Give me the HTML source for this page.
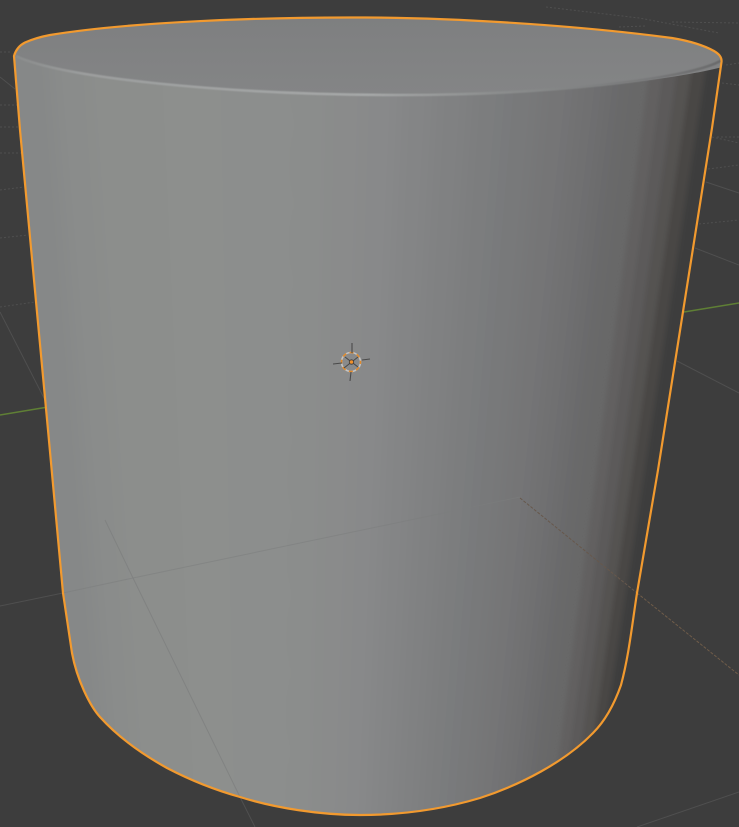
<!DOCTYPE html>
<html>
<head>
<meta charset="utf-8">
<style>
html,body{margin:0;padding:0;background:#3d3d3d;width:739px;height:827px;overflow:hidden}
svg{display:block}
</style>
</head>
<body>
<svg width="739" height="827" viewBox="0 0 739 827" xmlns="http://www.w3.org/2000/svg">
<defs>
<clipPath id="c"><path d="M14 56C16 49 20 45 25 42.500C33 39 42 36.500 50 35C130 22 260 17 365 17.500C470 18 590 27 672 38C690 41 705 46 714 51C719 54 722 57 721.500 62L712 128L658 470L637 593C632 625 629 655 621 685C614 705 604 722 593 733C565 762 520 785 480 798C440 810 400 815 360 815C320 815 275 808 240 797C215 790 190 780 167 768C140 753 118 737 100 717C90 706 77 680 72 653L63 593L48 430L20 130Z"/></clipPath>
<linearGradient id="top" x1="0" y1="18" x2="0" y2="96" gradientUnits="userSpaceOnUse">
<stop offset="0" stop-color="#7e7f80"/><stop offset="1" stop-color="#848586"/>
</linearGradient>
<linearGradient id="rim" x1="14" y1="0" x2="721" y2="0" gradientUnits="userSpaceOnUse">
<stop offset="0" stop-color="#8a8c8c"/><stop offset=".1" stop-color="#9c9e9e"/><stop offset=".5" stop-color="#a6a8a8"/><stop offset=".68" stop-color="#8c8e8e"/><stop offset=".9" stop-color="#78797a"/><stop offset="1" stop-color="#6a6a6b"/>
</linearGradient>
<filter id="b" filterUnits="userSpaceOnUse" x="-60" y="-60" width="860" height="950"><feGaussianBlur stdDeviation="9"/></filter>
<filter id="e" filterUnits="userSpaceOnUse" x="-60" y="-60" width="860" height="950"><feGaussianBlur stdDeviation="2.500"/></filter>
<filter id="s" filterUnits="userSpaceOnUse" x="-60" y="-60" width="860" height="950"><feGaussianBlur stdDeviation=".6"/></filter>
</defs>
<rect width="739" height="827" fill="#3d3d3d"/>
<g fill="none" stroke="#4f4f4f" stroke-width="1">
<g stroke-dasharray="2 2">
<path d="M0 52H12M0 105H17M0 127H19M0 153H21M0 190L24 187M0 238L28 235M0 307L35 302"/>
<path d="M546 7L639 18L719 33M672 22L739 23M619 27L646 26M726 65L739 63M722 83L739 85M717 137L739 137"/>
<path d="M712 137L739 143M708 169L739 165M699 224L739 220"/>
</g>
<path d="M0 77L15 89M0 312L45 400M0 606L63 593M706 182L739 193M695 248L739 265M677 361L739 393M637 827L739 792M240 797L255 827"/>
</g>
<path d="M0 415L48 407M684 312L739 303" stroke="#5f7f35" stroke-width="1.400" fill="none"/>
<g clip-path="url(#c)">
<g filter="url(#b)">
<polygon points="-40,0 44.600,0 112.300,830 40,830" fill="#868888"/>
<polygon points="44.600,0 80.700,0 137.900,830 112.300,830" fill="#8a8c8b"/>
<polygon points="80.700,0 152.900,0 189.300,830 137.900,830" fill="#8c8e8c"/>
<polygon points="152.900,0 225.100,0 240.600,830 189.300,830" fill="#8d8f8d"/>
<polygon points="225.100,0 297.300,0 292,830 240.600,830" fill="#8c8e8d"/>
<polygon points="297.300,0 333.400,0 317.600,830 292,830" fill="#8b8d8c"/>
<polygon points="333.400,0 369.500,0 343.300,830 317.600,830" fill="#8a8b8b"/>
<polygon points="369.500,0 405.600,0 369,830 343.300,830" fill="#88898a"/>
<polygon points="405.600,0 441.700,0 394.600,830 369,830" fill="#848586"/>
<polygon points="441.700,0 477.800,0 420.300,830 394.600,830" fill="#808182"/>
<polygon points="477.800,0 513.900,0 446,830 420.300,830" fill="#7c7d7e"/>
<polygon points="513.900,0 550,0 471.600,830 446,830" fill="#78797a"/>
<polygon points="550,0 586.100,0 497.300,830 471.600,830" fill="#747576"/>
<polygon points="586.100,0 615,0 517.900,830 497.300,830" fill="#707071"/>
<polygon points="615,0 636.600,0 533.200,830 517.900,830" fill="#6b6b6c"/>
<polygon points="636.600,0 780,0 660,830 533.200,830" fill="#676767"/>
</g>
<g filter="url(#e)">
<polygon points="658.300,0 672.700,0 558.900,830 548.700,830" fill="#626161"/>
<polygon points="672.700,0 687.200,0 569.200,830 558.900,830" fill="#5c5a5a"/>
<polygon points="687.200,0 701.600,0 579.500,830 569.200,830" fill="#555251"/>
<polygon points="701.600,0 716,0 589.700,830 579.500,830" fill="#484645"/>
<polygon points="716,0 780,0 660,830 589.700,830" fill="#3d3d3d"/>
</g>
<path d="M63 593L133 578L520 497" stroke="#7c7d7d" stroke-opacity=".55" stroke-width="1" fill="none"/>
<path d="M105 520L133 578L240 797" stroke="#7c7d7d" stroke-opacity=".7" stroke-width="1" fill="none"/>
<path d="M0 0H739V62C690 80 540 95 400 95C230 95 60 78 14 56Z" fill="url(#top)"/>
<path d="M722 60C690 80 540 95 400 95C230 95 60 78 16 56" fill="none" stroke="url(#rim)" stroke-width="2.600" filter="url(#s)"/>
</g>
<path d="M520 498L637 593" stroke="#67584c" stroke-width="1" stroke-dasharray="3 1.500" fill="none"/>
<path d="M637 593L739 675" stroke="#6f5c49" stroke-width="1" stroke-dasharray="3 1.500" fill="none"/>
<path d="M14 56C16 49 20 45 25 42.500C33 39 42 36.500 50 35C130 22 260 17 365 17.500C470 18 590 27 672 38C690 41 705 46 714 51C719 54 722 57 721.500 62L712 128L658 470L637 593C632 625 629 655 621 685C614 705 604 722 593 733C565 762 520 785 480 798C440 810 400 815 360 815C320 815 275 808 240 797C215 790 190 780 167 768C140 753 118 737 100 717C90 706 77 680 72 653L63 593L48 430L20 130Z" fill="none" stroke="#f29a2f" stroke-width="2.200" stroke-linejoin="round"/>
<g fill="none">
<circle cx="351" cy="362" r="9.500" stroke="#c4c4c4" stroke-width="1.600"/>
<circle cx="351" cy="362" r="9.500" stroke="#e08a2c" stroke-width="1.600" stroke-dasharray="4 3.500" stroke-dashoffset="2"/>
<path d="M352 343V353M351 372L350 381M333 364L342 363M362 360L370 359M345 357L358 367M344 368L358 357" stroke="#4a4a4a" stroke-width="1.100"/>
</g>
<circle cx="351.500" cy="362" r="2.200" fill="#f0902a" stroke="#3a3a3a" stroke-width=".8"/>
</svg>
</body>
</html>
